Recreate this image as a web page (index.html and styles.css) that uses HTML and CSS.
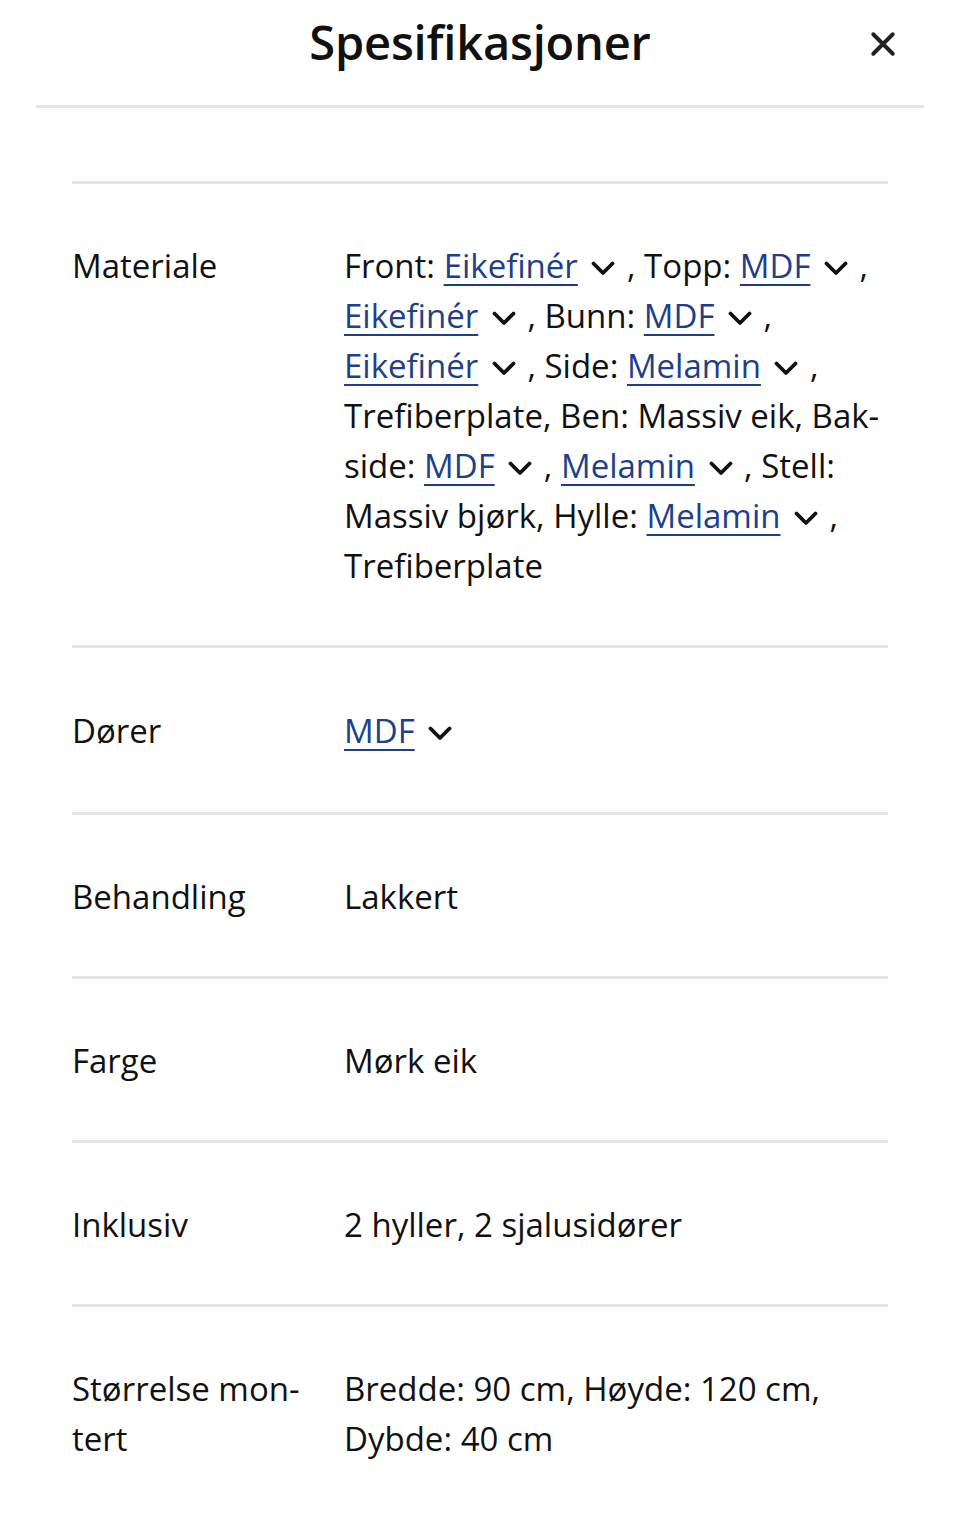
FILE: index.html
```html
<!DOCTYPE html>
<html lang="nb">
<head>
<meta charset="utf-8">
<title>Spesifikasjoner</title>
<link rel="stylesheet" href="styles.css">
</head>
<body>
<div class="sheet">
  <header class="head">
    <h1 class="title">Spesifikasjoner</h1>
    <button class="close" aria-label="Lukk">
      <svg viewBox="0 0 24 24" width="26" height="26"><path d="M3 3 L21 21 M21 3 L3 21" stroke="#222" stroke-width="3.6" stroke-linecap="round" fill="none"/></svg>
    </button>
  </header>
  <div class="specs">
    <div class="row">
      <div class="label">Materiale</div>
      <div class="value">Front: <span class="opt"><a href="#">Eikefinér</a> <span class="chev"></span></span> , Topp: <span class="opt"><a href="#">MDF</a> <span class="chev"></span></span> , <span class="opt"><a href="#">Eikefinér</a> <span class="chev"></span></span> , Bunn: <span class="opt"><a href="#">MDF</a> <span class="chev"></span></span> , <span class="opt"><a href="#">Eikefinér</a> <span class="chev"></span></span> , Side: <span class="opt"><a href="#">Melamin</a> <span class="chev"></span></span> , Trefiberplate, Ben: Massiv eik, Bak&shy;side: <span class="opt"><a href="#">MDF</a> <span class="chev"></span></span> , <span class="opt"><a href="#">Melamin</a> <span class="chev"></span></span> , Stell: Massiv bjørk, Hylle: <span class="opt"><a href="#">Melamin</a> <span class="chev"></span></span> , Trefiberplate</div>
    </div>
    <div class="row row-link">
      <div class="label">Dører</div>
      <div class="value"><span class="opt"><a href="#">MDF</a> <span class="chev"></span></span></div>
    </div>
    <div class="row">
      <div class="label">Behandling</div>
      <div class="value">Lakkert</div>
    </div>
    <div class="row">
      <div class="label">Farge</div>
      <div class="value">Mørk eik</div>
    </div>
    <div class="row">
      <div class="label">Inklusiv</div>
      <div class="value">2 hyller, 2 sjalusidører</div>
    </div>
    <div class="row">
      <div class="label">Størrelse mon&shy;tert</div>
      <div class="value">Bredde: 90 cm, Høyde: 120 cm, Dybde: 40 cm</div>
    </div>
  </div>
</div>
</body>
</html>
```
FILE: styles.css
```css
html, body {
  margin: 0;
  padding: 0;
  background: #fff;
}
body {
  font-family: "Open Sans", "Noto Sans", sans-serif;
  color: #111;
}
.sheet {
  padding: 0 36px;
}
.head {
  height: 105px;
  border-bottom: 3px solid #e3e3e8;
  display: flex;
  align-items: center;
  justify-content: center;
  position: relative;
}
.title {
  margin: 0;
  margin-top: -22px;
  font-size: 47px;
  font-weight: 600;
  letter-spacing: -0.2px;
  color: #111;
}
.close {
  position: absolute;
  right: 28px;
  top: 31px;
  border: 0;
  background: none;
  padding: 0;
  width: 26px;
  height: 26px;
  display: flex;
}
.specs {
  padding: 73px 36px 0;
}
.row {
  display: grid;
  grid-template-columns: 272px 1fr;
  border-top: 3px solid #e3e3e8;
  padding: 57px 0 54px;
  font-size: 33px;
  line-height: 50px;
}
.row-link {
  padding-top: 58px;
  padding-bottom: 56px;
}
.label {
  padding-right: 12px;
  hyphens: manual;
}
.value {
  hyphens: manual;
}
.opt {
  white-space: nowrap;
}
.value a {
  color: #1d3f8c;
  text-decoration: underline;
  text-decoration-thickness: 2px;
  text-underline-offset: 6px;
}
.chev {
  display: inline-block;
  width: 24px;
  height: 15px;
  margin: 0 3px 0 5px;
  vertical-align: 2px;
  background: no-repeat center / contain url("data:image/svg+xml,%3Csvg xmlns='http://www.w3.org/2000/svg' viewBox='0 0 24 15'%3E%3Cpath d='M2.5 2.5 L12 12 L21.5 2.5' fill='none' stroke='%23111' stroke-width='3.8' stroke-linecap='round' stroke-linejoin='round'/%3E%3C/svg%3E");
}
```
